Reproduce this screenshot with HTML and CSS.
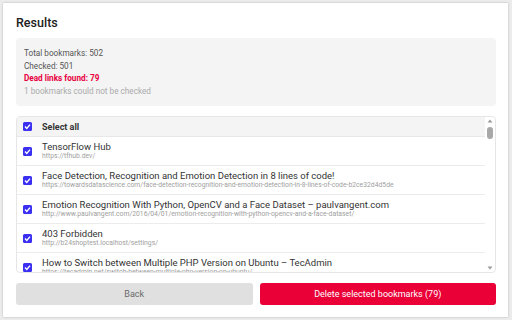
FILE: index.html
```html
<!DOCTYPE html>
<html>
<head>
<meta charset="utf-8">
<link rel="stylesheet" href="styles.css">
</head>
<body>
<div class="modal">
  <h1 class="title">Results</h1>
  <div class="stats">
    <div class="stat">Total bookmarks: 502</div>
    <div class="stat">Checked: 501</div>
    <div class="stat dead">Dead links found: 79</div>
    <div class="stat muted">1 bookmarks could not be checked</div>
  </div>
  <div class="list">
    <div class="list-body">
      <div class="row header">
        <span class="cb"><svg viewBox="0 0 9 9"><path d="M2 4.6 L3.8 6.4 L7 2.6" fill="none" stroke="#fff" stroke-width="1.4"/></svg></span>
        <span class="header-text">Select all</span>
      </div>
      <div class="row">
        <span class="cb"><svg viewBox="0 0 9 9"><path d="M2 4.6 L3.8 6.4 L7 2.6" fill="none" stroke="#fff" stroke-width="1.4"/></svg></span>
        <div class="info"><div class="name">TensorFlow Hub</div><div class="url">https://tfhub.dev/</div></div>
      </div>
      <div class="row">
        <span class="cb"><svg viewBox="0 0 9 9"><path d="M2 4.6 L3.8 6.4 L7 2.6" fill="none" stroke="#fff" stroke-width="1.4"/></svg></span>
        <div class="info"><div class="name">Face Detection, Recognition and Emotion Detection in 8 lines of code!</div><div class="url">https://towardsdatascience.com/face-detection-recognition-and-emotion-detection-in-8-lines-of-code-b2ce32d4d5de</div></div>
      </div>
      <div class="row">
        <span class="cb"><svg viewBox="0 0 9 9"><path d="M2 4.6 L3.8 6.4 L7 2.6" fill="none" stroke="#fff" stroke-width="1.4"/></svg></span>
        <div class="info"><div class="name">Emotion Recognition With Python, OpenCV and a Face Dataset – paulvangent.com</div><div class="url">http://www.paulvangent.com/2016/04/01/emotion-recognition-with-python-opencv-and-a-face-dataset/</div></div>
      </div>
      <div class="row">
        <span class="cb"><svg viewBox="0 0 9 9"><path d="M2 4.6 L3.8 6.4 L7 2.6" fill="none" stroke="#fff" stroke-width="1.4"/></svg></span>
        <div class="info"><div class="name">403 Forbidden</div><div class="url">http://b24shoptest.localhost/settings/</div></div>
      </div>
      <div class="row">
        <span class="cb"><svg viewBox="0 0 9 9"><path d="M2 4.6 L3.8 6.4 L7 2.6" fill="none" stroke="#fff" stroke-width="1.4"/></svg></span>
        <div class="info"><div class="name">How to Switch between Multiple PHP Version on Ubuntu – TecAdmin</div><div class="url">https://tecadmin.net/switch-between-multiple-php-version-on-ubuntu/</div></div>
      </div>
    </div>
    <div class="scrollbar">
      <svg class="arrow" viewBox="0 0 8 6"><path d="M1.5 4.5 L4 1.5 L6.5 4.5 Z" fill="#9a9a9a"/></svg>
      <div class="thumb"></div>
      <div class="track"></div>
      <svg class="arrow" viewBox="0 0 8 6"><path d="M1.5 1.5 L4 4.5 L6.5 1.5 Z" fill="#9a9a9a"/></svg>
    </div>
  </div>
  <div class="actions">
    <button class="btn back">Back</button>
    <button class="btn delete">Delete selected bookmarks (79)</button>
  </div>
</div>
</body>
</html>
```
FILE: styles.css
```css
* { box-sizing: border-box; }
html, body { margin: 0; padding: 0; }
body {
  width: 512px;
  height: 320px;
  background: #ececec;
  font-family: Roboto, "Liberation Sans", sans-serif;
  padding: 3px 4px 3px 3px;
  overflow: hidden;
}
.modal {
  width: 505px;
  height: 314px;
  background: #fff;
  box-shadow: 0 0 2px rgba(0,0,0,0.25);
  padding: 10px 12px 12px 13px;
  display: flex;
  flex-direction: column;
}
.title {
  margin: 0;
  height: 18px;
  line-height: 19px;
  font-size: 12.5px;
  font-weight: 500;
  color: #202020;
}
.stats {
  margin-top: 7px;
  height: 68px;
  background: #f4f4f4;
  border-radius: 4px;
  padding: 9px 8px 7px;
}
.stat {
  font-size: 8.2px;
  line-height: 12.7px;
  color: #555;
}
.stat.dead { color: #e8003d; font-weight: 700; }
.stat.muted { color: #aaa; }
.list {
  margin-top: 10px;
  height: 157px;
  border: 1px solid #e6e6e6;
  border-radius: 4px;
  display: flex;
  overflow: hidden;
}
.list-body {
  flex: 1;
  overflow: hidden;
}
.row {
  display: flex;
  align-items: center;
  height: 29px;
  border-bottom: 1px solid #ececec;
  padding-left: 6px;
}
.row.header {
  height: 20px;
  background: #f4f4f4;
  border-bottom: 1px solid #e8e8e8;
}
.cb {
  width: 9px;
  height: 9px;
  background: #3b30f2;
  border-radius: 1.5px;
  flex: none;
  display: flex;
  margin-right: 10px;
}
.cb svg { width: 9px; height: 9px; }
.header-text {
  font-size: 9px;
  font-weight: 700;
  color: #333;
}
.info { min-width: 0; white-space: nowrap; }
.name {
  font-size: 9.5px;
  line-height: 11px;
  color: #333;
}
.url {
  font-size: 6.8px;
  line-height: 9px;
  color: #a0a0a0;
}
.scrollbar {
  width: 10px;
  flex: none;
  display: flex;
  flex-direction: column;
  align-items: center;
  padding: 1px 0;
}
.arrow { width: 8px; height: 6px; flex: none; }
.thumb {
  width: 6px;
  height: 12px;
  margin-top: 3px;
  background: #a8a8a8;
  border-radius: 3px;
}
.track { flex: 1; }
.actions {
  margin-top: 10px;
  display: flex;
  gap: 7px;
}
.btn {
  flex: 1;
  height: 22px;
  border: none;
  border-radius: 3px;
  font-family: Roboto, "Liberation Sans", sans-serif;
  font-size: 9px;
}
.back { background: #e0e0e0; color: #6a6a6a; }
.delete { background: #ea0037; color: #fff; }
```
